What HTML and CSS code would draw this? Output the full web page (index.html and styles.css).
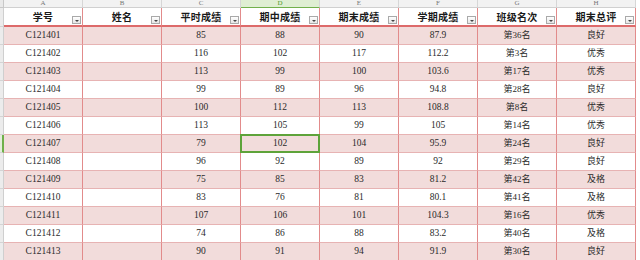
FILE: index.html
```html
<!DOCTYPE html>
<html lang="zh">
<head>
<meta charset="utf-8">
<link rel="stylesheet" href="styles.css">
</head>
<body>
<div class="sheet">
  <div class="corner"></div>
  <div class="colhead">A</div><div class="colhead">B</div><div class="colhead">C</div><div class="colhead active">D</div>
  <div class="colhead">E</div><div class="colhead">F</div><div class="colhead">G</div><div class="colhead">H</div>

  <div class="rowhead"></div>
  <div class="th">学号<span class="filter"></span></div>
  <div class="th">姓名<span class="filter"></span></div>
  <div class="th">平时成绩<span class="filter"></span></div>
  <div class="th">期中成绩<span class="filter"></span></div>
  <div class="th">期末成绩<span class="filter"></span></div>
  <div class="th">学期成绩<span class="filter"></span></div>
  <div class="th">班级名次<span class="filter"></span></div>
  <div class="th">期末总评<span class="filter"></span></div>

  <div class="rowhead"></div>
  <div class="td pink">C121401</div><div class="td pink"></div><div class="td pink">85</div><div class="td pink">88</div><div class="td pink">90</div><div class="td pink">87.9</div><div class="td pink cjk">第36名</div><div class="td pink cjk">良好</div>

  <div class="rowhead"></div>
  <div class="td">C121402</div><div class="td"></div><div class="td">116</div><div class="td">102</div><div class="td">117</div><div class="td">112.2</div><div class="td cjk">第3名</div><div class="td cjk">优秀</div>

  <div class="rowhead"></div>
  <div class="td pink">C121403</div><div class="td pink"></div><div class="td pink">113</div><div class="td pink">99</div><div class="td pink">100</div><div class="td pink">103.6</div><div class="td pink cjk">第17名</div><div class="td pink cjk">优秀</div>

  <div class="rowhead"></div>
  <div class="td">C121404</div><div class="td"></div><div class="td">99</div><div class="td">89</div><div class="td">96</div><div class="td">94.8</div><div class="td cjk">第28名</div><div class="td cjk">良好</div>

  <div class="rowhead"></div>
  <div class="td pink">C121405</div><div class="td pink"></div><div class="td pink">100</div><div class="td pink">112</div><div class="td pink">113</div><div class="td pink">108.8</div><div class="td pink cjk">第8名</div><div class="td pink cjk">优秀</div>

  <div class="rowhead"></div>
  <div class="td">C121406</div><div class="td"></div><div class="td">113</div><div class="td">105</div><div class="td">99</div><div class="td">105</div><div class="td cjk">第14名</div><div class="td cjk">优秀</div>

  <div class="rowhead selrow"></div>
  <div class="td pink">C121407</div><div class="td pink"></div><div class="td pink">79</div><div class="td pink selected">102</div><div class="td pink">104</div><div class="td pink">95.9</div><div class="td pink cjk">第24名</div><div class="td pink cjk">良好</div>

  <div class="rowhead"></div>
  <div class="td">C121408</div><div class="td"></div><div class="td">96</div><div class="td">92</div><div class="td">89</div><div class="td">92</div><div class="td cjk">第29名</div><div class="td cjk">良好</div>

  <div class="rowhead"></div>
  <div class="td pink">C121409</div><div class="td pink"></div><div class="td pink">75</div><div class="td pink">85</div><div class="td pink">83</div><div class="td pink">81.2</div><div class="td pink cjk">第42名</div><div class="td pink cjk">及格</div>

  <div class="rowhead"></div>
  <div class="td">C121410</div><div class="td"></div><div class="td">83</div><div class="td">76</div><div class="td">81</div><div class="td">80.1</div><div class="td cjk">第41名</div><div class="td cjk">及格</div>

  <div class="rowhead"></div>
  <div class="td pink">C121411</div><div class="td pink"></div><div class="td pink">107</div><div class="td pink">106</div><div class="td pink">101</div><div class="td pink">104.3</div><div class="td pink cjk">第16名</div><div class="td pink cjk">优秀</div>

  <div class="rowhead"></div>
  <div class="td">C121412</div><div class="td"></div><div class="td">74</div><div class="td">86</div><div class="td">88</div><div class="td">83.2</div><div class="td cjk">第40名</div><div class="td cjk">及格</div>

  <div class="rowhead"></div>
  <div class="td pink">C121413</div><div class="td pink"></div><div class="td pink">90</div><div class="td pink">91</div><div class="td pink">94</div><div class="td pink">91.9</div><div class="td pink cjk">第30名</div><div class="td pink cjk">良好</div>
</div>
</body>
</html>
```

FILE: styles.css
```css
html, body {
  margin: 0;
  padding: 0;
  background: #ffffff;
}
.sheet {
  display: grid;
  grid-template-columns: 4px repeat(8, 79px);
  grid-template-rows: 8px 19px;
  grid-auto-rows: 18px;
  width: 640px;
  height: 260px;
  overflow: hidden;
}
.corner {
  background: #e9e9e9;
  border-right: 1px solid #c8c8c8;
  border-bottom: 1px solid #c8c8c8;
  box-sizing: border-box;
}
.colhead {
  box-sizing: border-box;
  background: #f2f2f2;
  border-right: 1px solid #d6d6d6;
  border-bottom: 1px solid #d0d0d0;
  font-family: "Liberation Serif", serif;
  font-size: 7px;
  line-height: 7px;
  color: #777777;
  text-align: center;
  overflow: hidden;
}
.colhead.active {
  background: #dfeed3;
  color: #4f9a2d;
  border-bottom: 1px solid #72b04c;
}
.rowhead {
  box-sizing: border-box;
  background: #ececec;
  border-right: 1px solid #cfcfcf;
  border-bottom: 1px solid #d4d4d4;
}
.rowhead.selrow {
  background: #e3eedb;
  border-right: 2px solid #6fb04a;
}
.th {
  position: relative;
  box-sizing: border-box;
  background: #ffffff;
  border-right: 1px solid #e28b8b;
  border-bottom: 2px solid #dd6a6a;
  font-family: "Noto Sans CJK SC", sans-serif;
  font-weight: bold;
  font-size: 10px;
  line-height: 17px;
  letter-spacing: 0.3px;
  color: #1a1a1a;
  text-align: center;
}
.filter {
  position: absolute;
  right: 1px;
  bottom: 1px;
  width: 9px;
  height: 8px;
  box-sizing: border-box;
  border: 1px solid #a9a9a9;
  background: linear-gradient(#ffffff, #e6e6e6);
}
.filter::after {
  content: "";
  position: absolute;
  left: 2px;
  top: 3px;
  border-left: 2px solid transparent;
  border-right: 2px solid transparent;
  border-top: 2px solid #444444;
}
.td {
  position: relative;
  box-sizing: border-box;
  background: #ffffff;
  border-right: 1px solid #e28b8b;
  border-bottom: 1px solid #e7b3b3;
  font-family: "Liberation Serif", serif;
  font-size: 9.5px;
  line-height: 17px;
  color: #2a2a2a;
  text-align: center;
  white-space: nowrap;
}
.td.pink {
  background: #f2dcdb;
}
.td.cjk {
  font-family: "Liberation Serif", "Noto Sans CJK SC", serif;
  font-size: 9px;
}
.td.selected::before {
  content: "";
  position: absolute;
  left: -1px;
  top: -1px;
  right: -1px;
  bottom: -1px;
  border: 2px solid #5ea33a;
}
.td.selected::after {
  content: "";
  position: absolute;
  right: -2px;
  bottom: -2px;
  width: 3px;
  height: 3px;
  background: #5ea33a;
}
```
